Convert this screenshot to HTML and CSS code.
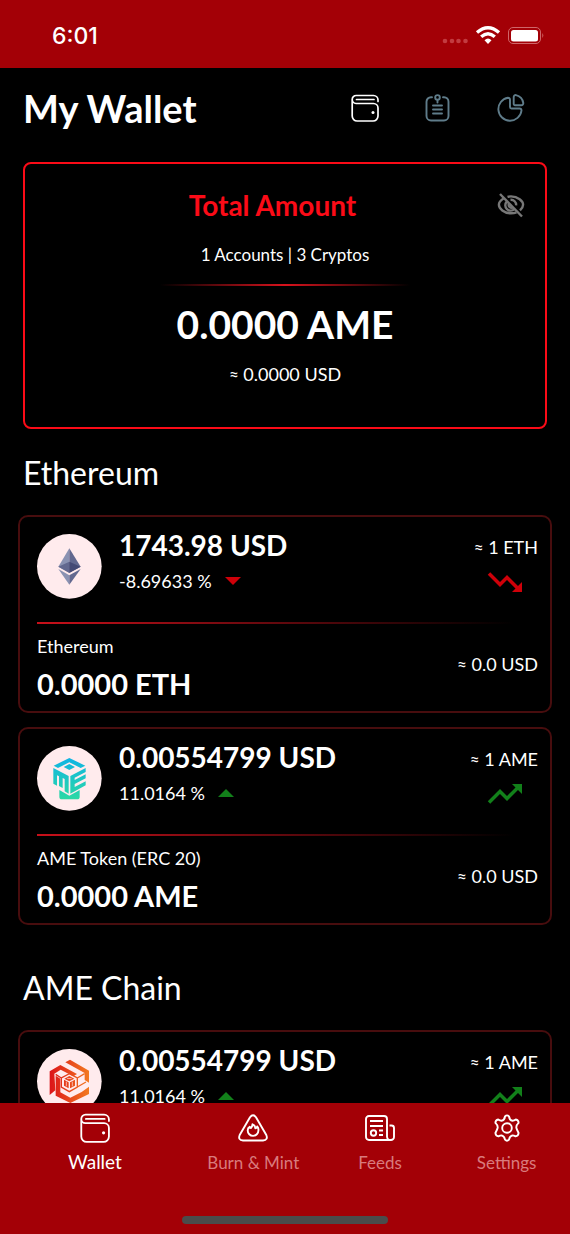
FILE: index.html
```html
<!DOCTYPE html>
<html lang="en">
<head>
<meta charset="utf-8">
<meta name="viewport" content="width=device-width, initial-scale=1">
<title>My Wallet</title>
<link rel="stylesheet" href="styles.css">
</head>
<body>
<svg class="defs" aria-hidden="true">
  <defs>
    <linearGradient id="teal" gradientUnits="userSpaceOnUse" x1="0" y1="36" x2="0" y2="160"><stop offset="0" stop-color="#10b4e4"/><stop offset="1" stop-color="#2cd9a4"/></linearGradient>
    <linearGradient id="flame" gradientUnits="userSpaceOnUse" x1="40" y1="0" x2="156" y2="0"><stop offset="0" stop-color="#dc1519"/><stop offset="1" stop-color="#f37a20"/></linearGradient>
  </defs>
  <symbol id="wallet" viewBox="0 0 28 28">
    <path d="M1.200 5.500V22a5 5 0 0 0 5 5H22a5 5 0 0 0 5-5v-8a4.500 4.500 0 0 0-4.500-4.500H5a4 4 0 0 1-3.800-4a4 4 0 0 1 4-4H22.500a4.500 4.500 0 0 1 4.500 4.500V7.500M5.500 5.500h17.500" fill="none" stroke="currentColor" stroke-width="1.700" stroke-linejoin="round" stroke-linecap="round"/>
    <circle cx="22" cy="18.500" r="1.500" fill="currentColor"/>
  </symbol>
  <symbol id="up" viewBox="0 0 36 22"><path d="M2 19.500L13 8.500l7 7L32 3.500" fill="none" stroke="currentColor" stroke-width="3.500"/><path d="M25 1h10v10z" fill="currentColor"/></symbol>
  <symbol id="down" viewBox="0 0 36 22"><path d="M2 2.500l11 11 7-7 12 12" fill="none" stroke="currentColor" stroke-width="3.500"/><path d="M25 21h10V11z" fill="currentColor"/></symbol>
</svg>

<header class="status">
  <span class="clock">6:01</span>
  <svg class="signal" width="102" height="20" viewBox="0 0 102 20" aria-hidden="true">
    <g fill="#c23b40"><circle cx="3" cy="15" r="2.300"/><circle cx="10" cy="15" r="2.300"/><circle cx="16.500" cy="15" r="2.300"/><circle cx="23.500" cy="15" r="2.300"/></g>
    <g fill="none" stroke="#fff" stroke-width="3.300"><path d="M35 6.600Q46-3 57 6.600"/><path d="M39.200 10.800Q46 4.600 52.800 10.800"/></g>
    <path d="M42.500 14.200Q46 11 49.500 14.200L46 18z" fill="#fff"/>
    <rect x="66.500" y="1.500" width="32" height="16" rx="4.500" fill="none" stroke="#cf6669"/>
    <rect x="69" y="4" width="27" height="11.500" rx="2.500" fill="#fff"/>
    <path d="M100.300 7q2 2.500 0 5z" fill="#cf6669"/>
  </svg>
</header>

<main class="content">
  <div class="heading">
    <h1>My Wallet</h1>
    <div class="tools">
      <button class="tool tool-on" aria-label="Wallet"><svg width="28" height="28"><use href="#wallet"/></svg></button>
      <button class="tool" aria-label="Notes"><svg width="28" height="28" viewBox="0 0 28 28" fill="none" stroke="currentColor" stroke-width="1.900" stroke-linecap="round"><path d="M8 3.200H7a4.500 4.500 0 0 0-4.500 4.500V22A4.500 4.500 0 0 0 7 26.500H20A4.500 4.500 0 0 0 24.500 22V7.700A4.500 4.500 0 0 0 20 3.200H19M9 11.500h9M9 15.500h9M9 19.500h9M13.500 6v2.500"/><circle cx="13.500" cy="3.400" r="2.300"/></svg></button>
      <button class="tool" aria-label="Chart"><svg width="28" height="28" viewBox="0 0 28 28" fill="none" stroke="currentColor" stroke-width="1.900" stroke-linejoin="round"><path d="M11 3.700a2 2 0 0 1 2 2V13a1.500 1.500 0 0 0 1.500 1.500H22.500a2 2 0 0 1 2 2A11.600 11.600 0 1 1 11 3.700z"/><path d="M16.700 3a2 2 0 0 1 2.300-1.900A9.500 9.500 0 0 1 26.300 9a2 2 0 0 1-2 2.200H18a1.300 1.300 0 0 1-1.300-1.300z"/></svg></button>
    </div>
  </div>

  <section class="total">
    <div class="total-top">
      <h2>Total Amount</h2>
      <button class="eye" aria-label="Hide amounts"><svg width="28" height="28" viewBox="0 0 28 28" fill="none" stroke="currentColor" stroke-width="2.400"><path d="M6.500 7.600C3.300 9.600 1.900 12 1.900 13.800C1.900 17.500 7 22.300 14 22.300Q17 22.300 19.500 21.300M10.500 5.900Q12 5.400 14 5.400C21 5.400 26.100 10 26.100 13.800Q26.100 16.600 23 19.300M9.800 10.600A5.200 5.200 0 0 0 17.500 18M13.500 8.700A5.200 5.200 0 0 1 19.100 14.400M12 12.500a3 3 0 0 0 4 4"/><path d="M3 3L25 25.500"/></svg></button>
    </div>
    <p class="counts">1 Accounts | 3 Cryptos</p>
    <div class="glow"></div>
    <p class="amount">0.0000 AME</p>
    <p class="worth"><span class="approx">≈</span> 0.0000 USD</p>
  </section>

  <h2 class="chain">Ethereum</h2>
  <article class="asset">
    <div class="quote">
      <svg class="coin" viewBox="0 0 195 195" aria-hidden="true"><circle cx="97" cy="97" r="97" fill="#ffebed"/><path d="M97 43L64 98l33 18z" fill="#8a92b2"/><path d="M97 43l34 55-34 18z" fill="#62688f"/><path d="M97 83L64 98l33 19z" fill="#62688f"/><path d="M97 83l34 15-34 19z" fill="#454a75"/><path d="M64 105l33 47v-28z" fill="#8a92b2"/><path d="M131 105l-34 47v-28z" fill="#62688f"/></svg>
      <div class="price"><strong>1743.98 USD</strong><span class="change">-8.69633 % <i class="tri tri-down"></i></span></div>
      <div class="rate"><span><span class="approx">≈</span> 1 ETH</span><svg class="trend fall"><use href="#down"/></svg></div>
    </div>
    <div class="rule"></div>
    <div class="holding"><div class="balance"><span>Ethereum</span><strong>0.0000 ETH</strong></div><span class="value"><span class="approx">≈</span> 0.0 USD</span></div>
  </article>
  <article class="asset">
    <div class="quote">
      <svg class="coin" viewBox="0 0 195 195" aria-hidden="true"><circle cx="97" cy="97" r="97" fill="#ffebed"/><path d="M67 132l30 17 31-17v20q0 8-8 8H75q-8 0-8-8z" fill="url(#teal)"/><path d="M97 36l48 23-14 7-34-17-34 17-13-7z" fill="url(#teal)"/><path d="M97 54l17 9-17 9-17-9z" fill="url(#teal)"/><path d="M49 66l46 24v53l-12-7V99l-6-3v30l-11-6V91l-6-3v31l-11-6z" fill="url(#teal)"/><path d="M100 90l46-24v12l-33 17v7l33-17v12l-33 17v9l33-17v12l-46 25z" fill="url(#teal)"/></svg>
      <div class="price"><strong>0.00554799 USD</strong><span class="change">11.0164 % <i class="tri tri-up"></i></span></div>
      <div class="rate"><span><span class="approx">≈</span> 1 AME</span><svg class="trend rise"><use href="#up"/></svg></div>
    </div>
    <div class="rule"></div>
    <div class="holding"><div class="balance"><span>AME Token (ERC 20)</span><strong>0.0000 AME</strong></div><span class="value"><span class="approx">≈</span> 0.0 USD</span></div>
  </article>

  <h2 class="chain chain-next">AME Chain</h2>
  <article class="asset">
    <div class="quote">
      <svg class="coin" viewBox="0 0 195 195" aria-hidden="true"><circle cx="97" cy="97" r="97" fill="#ffebed"/><g fill="url(#flame)"><path d="M99 32l57 33v36l-13-8V72L85 40z"/><path d="M38 138V67l32-19 50 27-11 7-38-20-19 12 3 50z"/><path d="M156 113v22l-56 27-44-22V80l14 9v41l30 16 34-17z"/></g><g fill="none" stroke="url(#flame)" stroke-width="4"><path d="M97 74l24 13v27l-24 14-24-14V87zM56 76l17 11M143 74l-22 13M121 114l26-15"/></g><path d="M97 81l15 8-15 8-15-8zM81 92l14 8v18l-14-8zM99 100l15-8v18l-15 8z" fill="url(#flame)"/><path d="M88 98v14M106 98v14M90 88l14 1" stroke="#ffebed" stroke-width="2"/></svg>
      <div class="price"><strong>0.00554799 USD</strong><span class="change">11.0164 % <i class="tri tri-up"></i></span></div>
      <div class="rate"><span><span class="approx">≈</span> 1 AME</span><svg class="trend rise"><use href="#up"/></svg></div>
    </div>
  </article>
</main>

<nav class="tabs">
  <a class="tab tab-on" href="#"><svg width="30" height="30"><use href="#wallet"/></svg>Wallet</a>
  <a class="tab" href="#"><svg width="30" height="30" viewBox="0 0 30 30" fill="none" stroke="#fff" stroke-width="1.900" stroke-linejoin="round"><path d="M12 4.200q3-4 6 0L28.300 22q2 5-3.300 5.500H5Q-.3 27 1.700 22z"/><path d="M14.500 11.300q3 1.200 2.800 4 1.600-.3 1.900-1.800 1.600 1.700 1.200 4a5.300 5.300 0 0 1-10.700 0q0-2.500 2-3.700.3 1 1.200 1.200 1.400-1.300 1.600-3.700z"/></svg>Burn &amp; Mint</a>
  <a class="tab" href="#"><svg width="30" height="30" viewBox="0 0 30 30" fill="none" stroke="#fff" stroke-width="1.900" stroke-linejoin="round"><path d="M4 3H19a3 3 0 0 1 3 3V23.500a3.500 3.500 0 0 0 3.500 3.500H4a3 3 0 0 1-3-3V6a3 3 0 0 1 3-3zM24.500 12.500h2a2.500 2.500 0 0 1 2.500 2.500V24a3 3 0 0 1-3.500 3M5 8H18M5 13H18M14 17.500h4M14 22h4"/><circle cx="8.500" cy="20" r="2.700"/></svg>Feeds</a>
  <a class="tab" href="#"><svg width="30" height="30" viewBox="0 0 30 30" fill="none" stroke="#fff" stroke-width="1.900" stroke-linejoin="round"><circle cx="15" cy="15" r="4.800"/><path d="M13 3.500q2-2.200 4 0 .5 3.700 3.500 4.200 1.700 0 3.300-1.200 2.800.5 2.800 3.400-2.800 2.700-2.200 5.100.3 1.500 2.200 5-.3 3-3 3.400-1.600-1-3.300-1-2.700.8-3.300 4.300-2 2-4 0-.6-3.500-3.300-4.300-1.700 0-3.300 1-2.700-.4-3-3.400 1.900-3.500 2.200-5 .6-2.400-2.200-5.100 0-2.900 2.800-3.400 1.600 1.200 3.300 1.200Q12.500 7.200 13 3.500z"/></svg>Settings</a>
  <div class="home-bar"></div>
</nav>
</body>
</html>
```

FILE: styles.css
```css
* { box-sizing: border-box; }
body {
  margin: 0;
  height: 100vh;
  display: flex;
  flex-direction: column;
  background: #000;
  color: #fff;
  font: 18px/24px Lato, "Liberation Sans", sans-serif;
}
h1, h2, p { margin: 0; }
svg { display: block; }
button { padding: 0; border: 0; background: none; color: inherit; }
.defs { position: absolute; width: 0; height: 0; }

.status {
  flex: none;
  display: flex;
  align-items: center;
  justify-content: space-between;
  height: 68px;
  padding: 4px 26px 0 52px;
  background: #a30006;
}
.clock { font: 500 23px/28px Inter, sans-serif; }

.content { flex: 1; min-height: 0; overflow: hidden; padding: 0 18px; }
.heading {
  display: flex;
  align-items: center;
  justify-content: space-between;
  height: 79px;
  padding: 0 27px 0 5px;
}
h1 { font-size: 38px; line-height: 44px; }
.tools { display: flex; gap: 45px; }
.tool { color: #5f7c8a; }
.tool-on { color: #fff; }

.total {
  margin: 15px 5px 0;
  padding: 24px 20px 40px;
  border: 2px solid #fb0b17;
  border-radius: 8px;
  text-align: center;
}
.total-top { display: flex; align-items: center; padding-left: 3px; }
.total-top h2 { flex: 1; color: #fb0b17; font-size: 28px; line-height: 34px; }
.eye { color: #777; }
.counts { margin-top: 21px; font-size: 17px; }
.glow {
  width: 52%;
  height: 2px;
  margin: 17px auto 0;
  background: linear-gradient(90deg, transparent, #d8121c, transparent);
}
.amount { margin-top: 14px; font-size: 39px; font-weight: 700; line-height: 48px; }
.worth { margin-top: 14px; }
.approx { font-size: 17px; }

.chain { margin: 24px 5px 0; font-size: 32px; font-weight: 400; line-height: 40px; }
.chain-next { margin-top: 43px; }
.chain + .asset { margin-top: 22px; }
.asset {
  height: 198px;
  margin-top: 14px;
  padding: 10px 12px 10px 17px;
  border: 2px solid #480d0e;
  border-radius: 10px;
}
.quote { display: flex; height: 95px; }
.coin { width: 65px; height: 65px; margin-top: 7px; }
.price { display: flex; flex-direction: column; flex: 1; padding-left: 17px; }
.price strong { font-size: 28px; line-height: 36px; }
.change { display: flex; align-items: center; gap: 13px; margin-top: 6px; }
.tri { border: 8px solid transparent; }
.tri-down { border-top-color: #cf0009; border-bottom: 0; }
.tri-up { border-bottom-color: #12801a; border-top: 0; }
.rate { display: flex; flex-direction: column; align-items: flex-end; padding-top: 8px; }
.trend { width: 36px; height: 22px; margin: 11px 15px 0 0; }
.rise { color: #12801a; }
.fall { color: #cf0009; }
.rule { height: 2px; margin-right: 24px; background: linear-gradient(90deg, #c8101a, transparent); }
.holding { display: flex; align-items: center; justify-content: space-between; padding-top: 10px; }
.value { margin-bottom: 10px; }
.balance { display: flex; flex-direction: column; gap: 6px; }
.balance strong { font-size: 29px; line-height: 40px; }

.tabs {
  flex: none;
  display: grid;
  grid-template-columns: 3fr 2fr 2fr 2fr;
  align-content: space-between;
  height: 131px;
  padding: 10px 0;
  background: #a30006;
}
.tab {
  display: flex;
  flex-direction: column;
  align-items: center;
  gap: 8px;
  color: #d97a7d;
  font-size: 17px;
  text-decoration: none;
}
.tab-on { gap: 7px; color: #fff; font-size: 19px; }
.home-bar {
  grid-column: 1 / -1;
  justify-self: center;
  width: 36%;
  height: 8px;
  border-radius: 4px;
  background: #4b4b4b;
}
```
